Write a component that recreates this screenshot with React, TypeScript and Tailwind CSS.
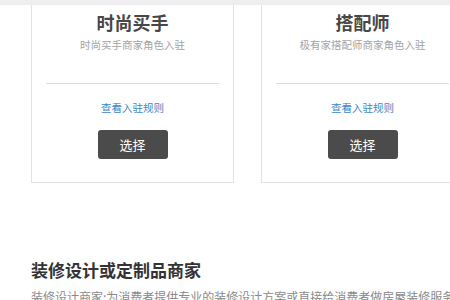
export default function App() {
  const cards = [
    { title: "时尚买手", sub: "时尚买手商家角色入驻" },
    { title: "搭配师", sub: "极有家搭配师商家角色入驻" },
  ];
  return (
    <div
      className="w-[450px] h-[300px] overflow-hidden bg-white"
      style={{ fontFamily: '"Noto Sans CJK SC", "Noto Sans", sans-serif' }}
    >
      <div className="h-[5px] bg-[#eeeef1]" />
      <div className="flex gap-[27px] pl-[31px]">
        {cards.map((c) => (
          <div
            key={c.title}
            className="w-[203px] shrink-0 h-[178px] border-x border-b border-[#e2e2e2] flex flex-col items-center pt-[5px]"
          >
            <div className="text-[18px] leading-[24px] font-bold text-[#474747]">{c.title}</div>
            <div className="mt-[3px] text-[10.5px] leading-[16px] text-[#a3a3a3]">{c.sub}</div>
            <div className="mt-[30px] self-stretch mx-[14px] h-px bg-[#dcdcdc]" />
            <div className="mt-[16px] text-[10.5px] leading-[16px] text-[#3d86c6]">查看入驻规则</div>
            <div className="mt-[14px] w-[70px] h-[29px] rounded-[3px] bg-[#4b4b4b] text-white text-[13px] flex items-center justify-center">
              选择
            </div>
          </div>
        ))}
      </div>
      <div className="pl-[31px] mt-[75px]">
        <div className="text-[17px] leading-[24px] font-bold text-[#333]">装修设计或定制品商家</div>
        <div className="mt-[6px] text-[12px] leading-[18px] text-[#8a8a8a] whitespace-nowrap">
          装修设计商家:为消费者提供专业的装修设计方案或直接给消费者做房屋装修服务
        </div>
      </div>
    </div>
  );
}
